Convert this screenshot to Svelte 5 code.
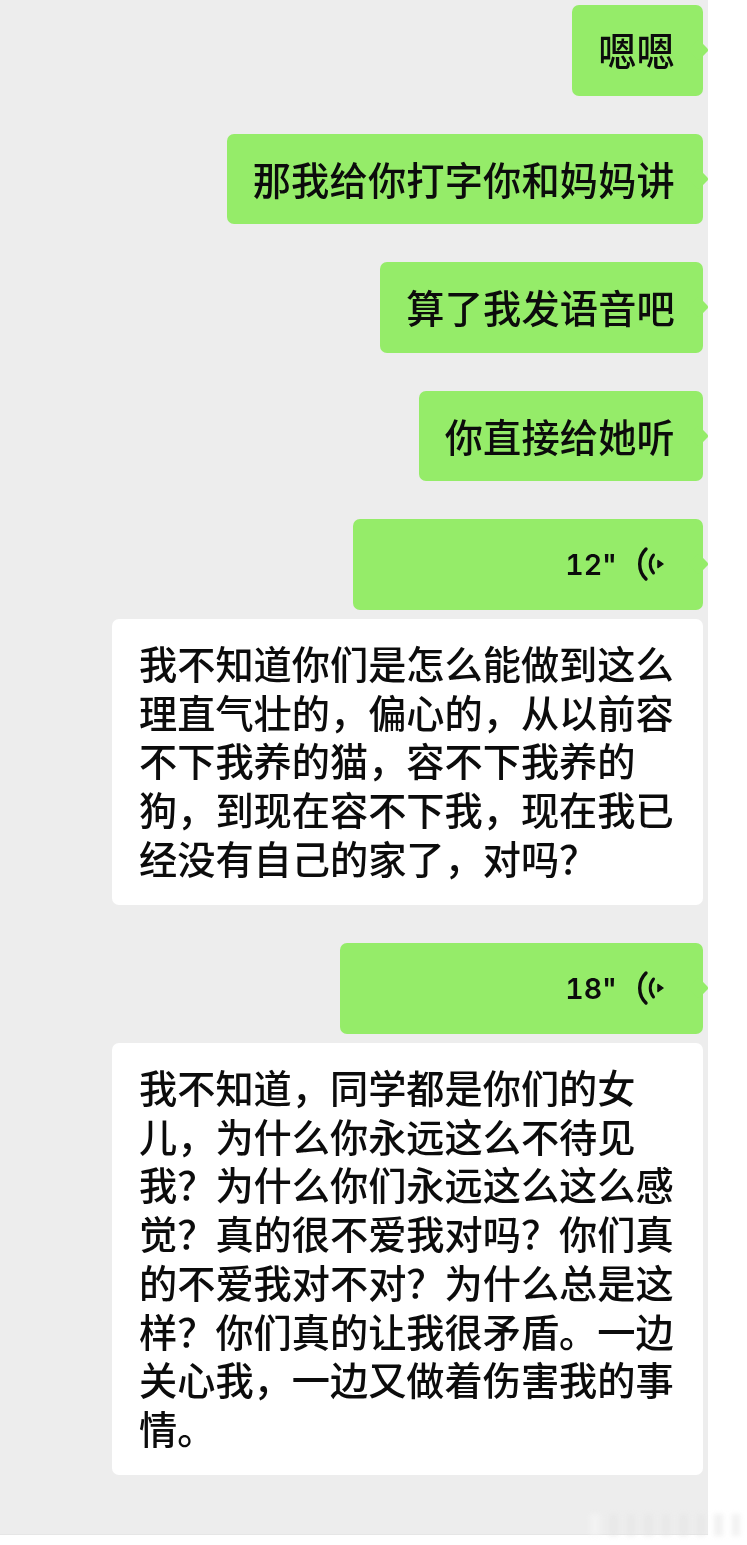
<script>
  const sent = ['嗯嗯', '那我给你打字你和妈妈讲', '算了我发语音吧', '你直接给她听'];
  const first = ['我不知道你们是怎么能做到这么', '理直气壮的，偏心的，从以前容', '不下我养的猫，容不下我养的', '狗，到现在容不下我，现在我已', '经没有自己的家了，对吗？'];
  const second = ['我不知道，同学都是你们的女', '儿，为什么你永远这么不待见', '我？为什么你们永远这么这么感', '觉？真的很不爱我对吗？你们真', '的不爱我对不对？为什么总是这', '样？你们真的让我很矛盾。一边', '关心我，一边又做着伤害我的事', '情。'];
</script>

{#snippet wave()}
  <svg class="wave" viewBox="0 0 28 36" width="28" height="36" aria-hidden="true">
    <path d="M9 3 A21 21 0 0 0 9 33" />
    <path class="inner" d="M16.5 9 A14 14 0 0 0 16.5 27" />
    <path class="dot" d="M21 14.5 L26 18 L21 21.5 Z" />
  </svg>
{/snippet}

<main class="page">
  <section class="chat">
    {#each sent as text}
      <div class="bubble green text">{text}</div>
    {/each}

    <div class="bubble green voice first-voice"><span>12"</span>{@render wave()}</div>

    <div class="bubble white">
      {#each first as line}<div>{line}</div>{/each}
    </div>

    <div class="bubble green voice second-voice"><span>18"</span>{@render wave()}</div>

    <div class="bubble white">
      {#each second as line}<div>{line}</div>{/each}
    </div>
  </section>
  <div class="smudge" aria-hidden="true">
    <i class="tall"></i><i></i><i></i><i></i><i></i><i></i><i></i><i></i><i></i>
  </div>
</main>

<style>
  :global(body) {
    margin: 0;
    background: #fff;
  }
  .page {
    position: relative;
    width: 747px;
    height: 1545px;
    overflow: hidden;
    font-family: "Noto Sans CJK SC", "Liberation Sans", sans-serif;
    color: #0c0c0c;
  }
  .chat {
    box-sizing: border-box;
    width: 708px;
    height: 1535px;
    padding: 5px 5px 0 0;
    background: #ededed;
    border-bottom: 1px solid #e6e6e6;
    display: flex;
    flex-direction: column;
    align-items: flex-end;
    filter: blur(0.3px);
  }
  .bubble {
    position: relative;
    box-sizing: border-box;
    border-radius: 7px;
    font-size: 38.2px;
    white-space: nowrap;
  }
  .green {
    background: #95ec69;
    height: 90.5px;
    margin-bottom: 38px;
  }
  .green::after {
    content: "";
    position: absolute;
    right: -3px;
    top: 50%;
    width: 15px;
    height: 15px;
    border-radius: 3px;
    background: #95ec69;
    transform: translateY(-50%) rotate(45deg);
  }
  .text {
    display: flex;
    align-items: center;
    padding: 0 28px 0 26px;
    line-height: 1;
    font-weight: 500;
    letter-spacing: 0.2px;
  }
  .voice {
    display: flex;
    align-items: center;
    justify-content: flex-end;
    gap: 20px;
    padding: 0 38px 0 0;
    margin-bottom: 9.5px;
    font-family: "Inter", "Liberation Sans", sans-serif;
    font-size: 28.5px;
    font-weight: 600;
    font-variant-numeric: tabular-nums;
  }
  .first-voice { width: 350px; }
  .second-voice { width: 363px; }
  .wave {
    flex: none;
    fill: none;
    stroke: #0c0c0c;
    stroke-width: 3.4;
    stroke-linecap: round;
    position: relative;
    z-index: 1;
  }
  .wave .inner {
    stroke-width: 3;
  }
  .wave .dot {
    fill: #0c0c0c;
    stroke-width: 1.5;
    stroke-linejoin: round;
  }
  .white {
    width: 591px;
    background: #fff;
    padding: 20px 28px 22.5px 27px;
    margin-bottom: 38px;
    line-height: 48.7px;
    font-weight: 500;
  }
  .smudge {
    position: absolute;
    left: 590px;
    top: 1514px;
    width: 150px;
    height: 22px;
    display: flex;
    gap: 9px;
    filter: blur(2.5px);
    opacity: 0.5;
  }
  .smudge i {
    flex: 1;
    background: #e4e4e4;
  }
  .smudge .tall {
    flex: none;
    width: 10px;
    background: #f8f8f8;
  }
</style>
